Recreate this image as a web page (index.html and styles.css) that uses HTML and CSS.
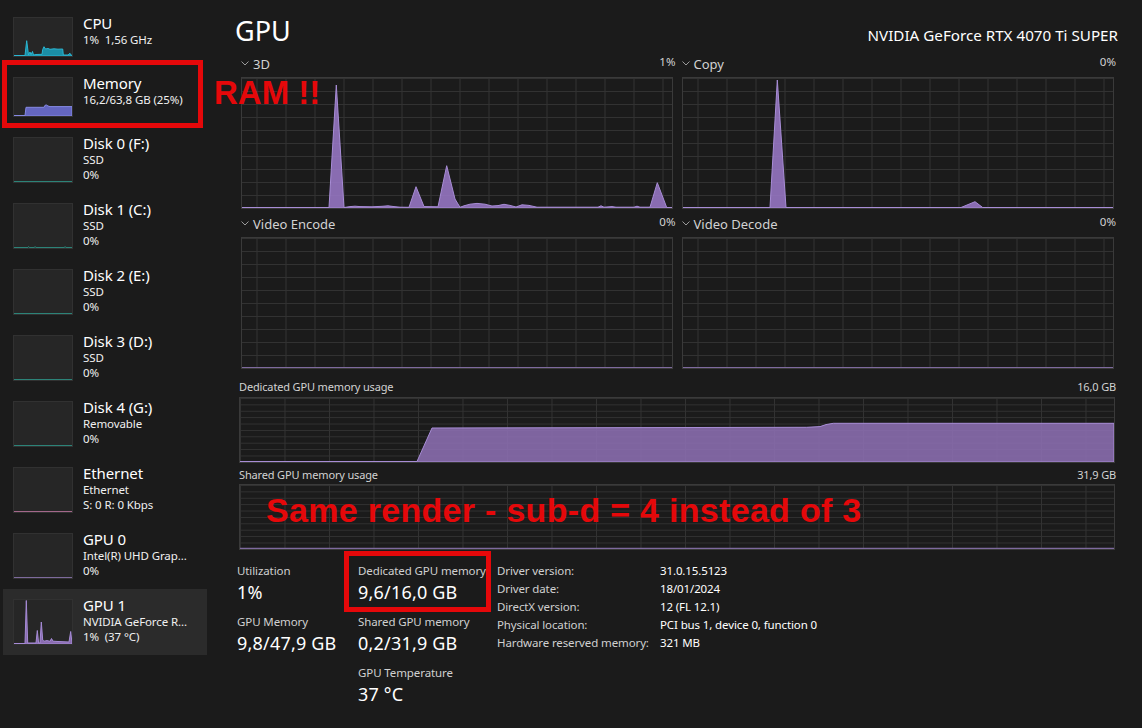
FILE: index.html
```html
<!DOCTYPE html>
<html>
<head>
<meta charset="utf-8">
<link rel="stylesheet" href="styles.css">
</head>
<body>
<div class="app">
  <aside class="sidebar">
    <div class="item">
      <svg class="thumb t2" viewBox="0 0 58 38" preserveAspectRatio="none">
        <path class="cpu" d="M0,37.5 L11,37.5 L12.7,22.7 L14.5,37 L16,34 L17,36.8 L18.5,33.5 L19.5,37 L22,36.5 L28,36.3 L28.7,31.5 L30,28.7 L31.5,31 L34,30.5 L36,31.3 L40,30.8 L44,31.2 L48.7,31 L49.3,37 L54,37 L56,35.3 L57,37 L58,37.5 L58,38 L0,38 Z"/>
      </svg>
      <div class="info"><div class="name">CPU</div><div class="sub">1%&nbsp; 1,56 GHz</div></div>
    </div>
    <div class="item">
      <svg class="thumb t2" viewBox="0 0 58 38" preserveAspectRatio="none">
        <path class="mem" d="M0,37.5 L11,37.5 L12,29.3 L30,29.3 L31,27.3 L32.5,27 L34,28 L36,28.6 L58,28.6 L58,38 L0,38 Z"/>
      </svg>
      <div class="info"><div class="name">Memory</div><div class="sub">16,2/63,8 GB (25%)</div></div>
    </div>
    <div class="item">
      <svg class="thumb" viewBox="0 0 58 44" preserveAspectRatio="none"><path class="disk" d="M0,43.5 L58,43.5"/></svg>
      <div class="info"><div class="name">Disk 0 (F:)</div><div class="sub">SSD</div><div class="sub">0%</div></div>
    </div>
    <div class="item">
      <svg class="thumb" viewBox="0 0 58 44" preserveAspectRatio="none"><path class="disk" d="M0,43.5 L14,43.5 L14.6,42.5 L15.2,43.5 L20.5,43.5 L21.1,42.5 L21.7,43.5 L50.5,43.5 L51.1,42.5 L51.7,43.5 L58,43.5"/></svg>
      <div class="info"><div class="name">Disk 1 (C:)</div><div class="sub">SSD</div><div class="sub">0%</div></div>
    </div>
    <div class="item">
      <svg class="thumb" viewBox="0 0 58 44" preserveAspectRatio="none"><path class="disk" d="M0,43.5 L58,43.5"/></svg>
      <div class="info"><div class="name">Disk 2 (E:)</div><div class="sub">SSD</div><div class="sub">0%</div></div>
    </div>
    <div class="item">
      <svg class="thumb" viewBox="0 0 58 44" preserveAspectRatio="none"><path class="disk" d="M0,43.5 L58,43.5"/></svg>
      <div class="info"><div class="name">Disk 3 (D:)</div><div class="sub">SSD</div><div class="sub">0%</div></div>
    </div>
    <div class="item">
      <svg class="thumb" viewBox="0 0 58 44" preserveAspectRatio="none"><path class="disk" d="M0,43.5 L58,43.5"/></svg>
      <div class="info"><div class="name">Disk 4 (G:)</div><div class="sub">Removable</div><div class="sub">0%</div></div>
    </div>
    <div class="item">
      <svg class="thumb" viewBox="0 0 58 44" preserveAspectRatio="none"><path class="eth" d="M0,43.5 L58,43.5"/></svg>
      <div class="info"><div class="name">Ethernet</div><div class="sub">Ethernet</div><div class="sub">S: 0 R: 0 Kbps</div></div>
    </div>
    <div class="item">
      <svg class="thumb" viewBox="0 0 58 44" preserveAspectRatio="none"><path class="gpu0" d="M0,43.5 L58,43.5"/></svg>
      <div class="info"><div class="name">GPU 0</div><div class="sub">Intel(R) UHD Grap...</div><div class="sub">0%</div></div>
    </div>
    <div class="item selected">
      <svg class="thumb" viewBox="0 0 58 44" preserveAspectRatio="none">
        <path class="gpu" d="M0,43.5 L11,43.5 L12.3,0.5 L13.7,43 L22,43 L23.3,30.5 L24.6,43 L26,43 L27.3,22 L28.7,40 L30,41.2 L33,40.6 L36,41.3 L37.5,38.5 L39,41.2 L44,41.5 L55,42 L56.7,31.5 L58,43.5 L58,44 L0,44 Z"/>
      </svg>
      <div class="info"><div class="name">GPU 1</div><div class="sub">NVIDIA GeForce R...</div><div class="sub">1%&nbsp; (37 °C)</div></div>
    </div>
  </aside>

  <main class="main">
    <header class="head">
      <h1 class="title">GPU</h1>
      <div class="model">NVIDIA GeForce RTX 4070 Ti SUPER</div>
    </header>

    <section class="engines">
      <div class="engine">
        <div class="elabel">
          <span class="ename"><svg class="chev" viewBox="0 0 8 5"><polyline points="0.5,0.5 4,4 7.5,0.5"/></svg>3D</span>
          <span class="pct">1%</span>
        </div>
        <svg class="plot" viewBox="0 0 430 130" preserveAspectRatio="none">
          <path class="area" d="M0,129.5 L87,129.5 L94.3,7 L102,129.5 L108,128.6 L113,128.2 L118,128.6 L130,128.8 L140,128.3 L146,127.8 L152,128.6 L158,129.2 L167,129.3 L174,108.7 L182,128.6 L196,128.8 L204.7,87.7 L213,121 L218,129.3 L222,127.8 L228,126.2 L235,125.4 L243,126.2 L250,128 L256,127.6 L262,126.3 L268,127.4 L274,129 L280,126.8 L287,127.4 L295,129.2 L356,129.2 L359,127.8 L362,129.2 L370,128.6 L374,129.2 L392,129.2 L395,128.2 L398,129.2 L408,129.2 L415.3,104.7 L424.7,129.5 L430,129.5 L430,130 L0,130 Z"/>
        </svg>
      </div>
      <div class="engine">
        <div class="elabel">
          <span class="ename"><svg class="chev" viewBox="0 0 8 5"><polyline points="0.5,0.5 4,4 7.5,0.5"/></svg>Copy</span>
          <span class="pct">0%</span>
        </div>
        <svg class="plot" viewBox="0 0 430 130" preserveAspectRatio="none">
          <path class="area" d="M0,129.5 L87,129.5 L94.3,2 L103,129.5 L278,129.5 L292,123.7 L299.7,129.5 L430,129.5 L430,130 L0,130 Z"/>
        </svg>
      </div>
      <div class="engine">
        <div class="elabel">
          <span class="ename"><svg class="chev" viewBox="0 0 8 5"><polyline points="0.5,0.5 4,4 7.5,0.5"/></svg>Video Encode</span>
          <span class="pct">0%</span>
        </div>
        <svg class="plot" viewBox="0 0 430 130" preserveAspectRatio="none">
          <path class="line" d="M0,129.5 L430,129.5"/>
        </svg>
      </div>
      <div class="engine">
        <div class="elabel">
          <span class="ename"><svg class="chev" viewBox="0 0 8 5"><polyline points="0.5,0.5 4,4 7.5,0.5"/></svg>Video Decode</span>
          <span class="pct">0%</span>
        </div>
        <svg class="plot" viewBox="0 0 430 130" preserveAspectRatio="none">
          <path class="line" d="M0,129.5 L430,129.5"/>
        </svg>
      </div>
    </section>

    <section class="memgraph">
      <div class="mlabel"><span>Dedicated GPU memory usage</span><span>16,0 GB</span></div>
      <svg class="mplot" viewBox="0 0 874 64" preserveAspectRatio="none">
        <path class="marea" d="M0,63.5 L177,63.5 L192,30 L566.7,29.3 L580,28.6 L586,26.6 L593.3,25.3 L874,25.3 L874,64 L0,64 Z"/>
      </svg>
    </section>
    <section class="memgraph shared">
      <div class="mlabel"><span>Shared GPU memory usage</span><span>31,9 GB</span></div>
      <svg class="mplot" viewBox="0 0 874 64" preserveAspectRatio="none">
        <path class="line" d="M0,63.4 L874,63.4"/>
      </svg>
    </section>

    <section class="stats">
      <div class="col c1">
        <div class="stat"><div class="slabel">Utilization</div><div class="sval">1%</div></div>
        <div class="stat"><div class="slabel">GPU Memory</div><div class="sval">9,8/47,9 GB</div></div>
      </div>
      <div class="col c2">
        <div class="stat"><div class="slabel">Dedicated GPU memory</div><div class="sval">9,6/16,0 GB</div></div>
        <div class="stat"><div class="slabel">Shared GPU memory</div><div class="sval">0,2/31,9 GB</div></div>
        <div class="stat"><div class="slabel">GPU Temperature</div><div class="sval">37 °C</div></div>
      </div>
      <div class="col c3">
        <div class="kv"><span class="k">Driver version:</span><span class="v">31.0.15.5123</span></div>
        <div class="kv"><span class="k">Driver date:</span><span class="v">18/01/2024</span></div>
        <div class="kv"><span class="k">DirectX version:</span><span class="v">12 (FL 12.1)</span></div>
        <div class="kv"><span class="k">Physical location:</span><span class="v">PCI bus 1, device 0, function 0</span></div>
        <div class="kv"><span class="k">Hardware reserved memory:</span><span class="v">321 MB</span></div>
      </div>
    </section>
  </main>
</div>

<div class="redbox box-mem"></div>
<div class="redbox box-ded"></div>
<div class="anno anno-ram">RAM !!</div>
<div class="anno anno-same">Same render - sub-d = 4 instead of 3</div>
</body>
</html>
```

FILE: styles.css
```css
* { box-sizing: border-box; }
html, body { margin: 0; padding: 0; }
body {
  width: 1142px;
  height: 728px;
  background: #1b1b1b;
  color: #ffffff;
  font-family: "Noto Sans", "Open Sans", sans-serif;
  overflow: hidden;
  position: relative;
}
.app { display: flex; height: 728px; }

/* Sidebar */
.sidebar { width: 210px; flex: none; padding-top: 7px; }
.item {
  display: flex;
  align-items: flex-start;
  gap: 10px;
  margin-left: 3px;
  width: 204px;
  padding: 10px 10px;
}
.item.selected { background: #2b2b2b; }
.thumb {
  display: block;
  flex: none;
  width: 60px;
  height: 46px;
  background: #262626;
  border: 1px solid #313131;
}
.thumb.t2 { height: 40px; }
.thumb path { vector-effect: non-scaling-stroke; stroke-width: 1; }
.thumb .cpu { fill: #1b8ea6; stroke: #2ab6d2; }
.thumb .mem { fill: #6466c0; stroke: #8589e2; }
.thumb .gpu { fill: #8a6cb0; stroke: #a68bd6; }
.thumb .disk { fill: none; stroke: #2c8378; }
.thumb .eth { fill: none; stroke: #a3678a; }
.thumb .gpu0 { fill: none; stroke: #7d6a9c; }
.info { margin-top: -2px; white-space: nowrap; }
.name { font-size: 15px; line-height: 17px; color: #fff; letter-spacing: -0.1px; }
.sub { font-size: 11.5px; line-height: 15px; color: #f0f0f0; letter-spacing: -0.1px; }

/* Main */
.main { flex: 1; padding: 0 26px 0 29px; min-width: 0; }
.head {
  display: flex;
  justify-content: space-between;
  align-items: baseline;
  padding-top: 15px;
  height: 47px;
}
.title { margin: 0 0 0 -4px; font-size: 27px; line-height: 32px; font-weight: 400; }
.model { font-size: 15.2px; line-height: 20px; margin-right: -2px; }

.engines {
  display: grid;
  grid-template-columns: 1fr 1fr;
  column-gap: 6px;
  padding-left: 2px;
  margin-top: 6px;
}
.engine { margin-bottom: 4px; }
.engine:nth-child(n+3) { margin-bottom: 0; }
.elabel {
  display: flex;
  justify-content: space-between;
  align-items: baseline;
  height: 18px;
  line-height: 18px;
  margin-bottom: 6px;
  color: #d2d2d2;
}
.ename { font-size: 13px; display: flex; align-items: center; }
.chev { width: 8px; height: 5px; margin: 0 4px 0 0; }
.chev polyline { fill: none; stroke: #9a9a9a; stroke-width: 1; }
.pct { font-size: 11.5px; }

.plot, .mplot {
  display: block;
  border: 1px solid #3a3a3a;
  background-color: #1b1b1b;
  background-image:
    linear-gradient(to right, #323232 1px, transparent 1px),
    linear-gradient(to bottom, #323232 1px, transparent 1px);
}
.plot {
  width: 432px;
  height: 132px;
  background-size: 29px 100%, 100% 13px;
  background-position: 14.5px 0, 0 0;
}
.mplot {
  width: 876px;
  height: 66px;
  background-size: 44.5px 100%, 100% 6.4px;
  background-position: 44.5px 0, 0 0;
}
.area { fill: rgba(152, 120, 198, 0.88); stroke: #a88dd6; stroke-width: 1; vector-effect: non-scaling-stroke; }
.marea { fill: rgba(140, 110, 178, 0.88); stroke: #a88dd6; stroke-width: 1; vector-effect: non-scaling-stroke; }
.line { fill: none; stroke: #7e6a9e; stroke-width: 1.2; vector-effect: non-scaling-stroke; }

.memgraph { margin-top: 11px; }
.memgraph.shared { margin-top: 5px; }
.mlabel {
  display: flex;
  justify-content: space-between;
  font-size: 11px;
  line-height: 14px;
  color: #d2d2d2;
  width: 877px;
  margin-bottom: 3px;
  letter-spacing: -0.15px;
}
.shared .mlabel { margin-bottom: 2px; }

/* Stats */
.stats { display: flex; margin-top: 12px; margin-left: -2px; }
.col { flex: none; }
.c1 { width: 121px; }
.c2 { width: 139px; }
.stat { margin-bottom: 9px; }
.slabel { font-size: 11.5px; line-height: 18px; color: #d0d0d0; white-space: nowrap; letter-spacing: -0.1px; }
.sval { font-size: 18px; line-height: 24px; color: #fff; white-space: nowrap; letter-spacing: 0.2px; }
.kv { display: flex; font-size: 11.5px; line-height: 18px; white-space: nowrap; letter-spacing: -0.12px; }
.k { width: 163px; color: #d0d0d0; }
.v { color: #fff; }

/* Annotations */
.redbox { position: absolute; border: 5px solid #e5080a; }
.box-mem { left: 2px; top: 60px; width: 201px; height: 68px; }
.box-ded { left: 344px; top: 551px; width: 147px; height: 61px; }
.anno {
  position: absolute;
  font-family: "Liberation Sans", Arial, sans-serif;
  font-weight: 700;
  color: #e5080a;
  line-height: 1;
  white-space: nowrap;
}
.anno-ram { left: 214px; top: 76px; font-size: 33px; }
.anno-same { left: 266px; top: 493px; font-size: 34px; letter-spacing: 0.3px; }
```
